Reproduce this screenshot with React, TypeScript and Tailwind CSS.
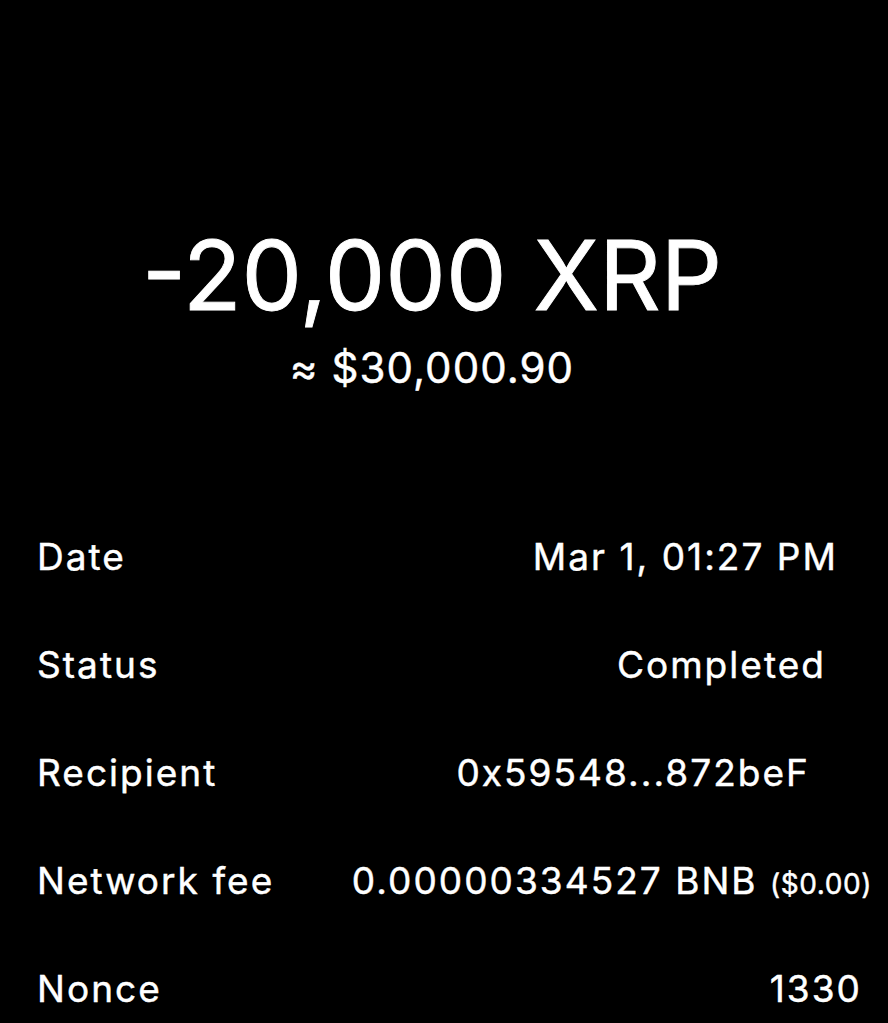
import React from "react";

const rows: { label: string; value: React.ReactNode; pr: string }[] = [
  { label: "Date", value: "Mar 1, 01:27 PM", pr: "pr-[50px]" },
  { label: "Status", value: "Completed", pr: "pr-[62px]" },
  { label: "Recipient", value: "0x59548...872beF", pr: "pr-[78px]" },
  {
    label: "Network fee",
    value: (
      <span>
        0.00000334527 BNB <span className="text-[28px] tracking-[0.02em]">($0.00)</span>
      </span>
    ),
    pr: "pr-[16px]",
  },
  { label: "Nonce", value: "1330", pr: "pr-[26px]" },
];

export default function App() {
  return (
    <div
      className="w-[888px] h-[1023px] overflow-hidden bg-black text-white [-webkit-text-stroke:0.45px_white]"
      style={{ fontFamily: "Inter, 'Noto Sans', sans-serif" }}
    >
      <div className="flex flex-col items-center pt-[227px] pr-[24px]">
        <div className="text-[96px] font-normal leading-none [-webkit-text-stroke:0.9px_white]">-20,000 XRP</div>
        <div className="mt-[24px] text-[42px] font-normal leading-none tracking-[0.025em]">≈ $30,000.90</div>
      </div>
      <div className="mt-[113px] flex flex-col">
        {rows.map((r) => (
          <div
            key={r.label}
            className={`flex h-[108px] items-center justify-between pl-[37px] text-[37px] font-normal leading-none tracking-[0.055em] ${r.pr}`}
          >
            <span>{r.label}</span>
            <span>{r.value}</span>
          </div>
        ))}
      </div>
    </div>
  );
}
